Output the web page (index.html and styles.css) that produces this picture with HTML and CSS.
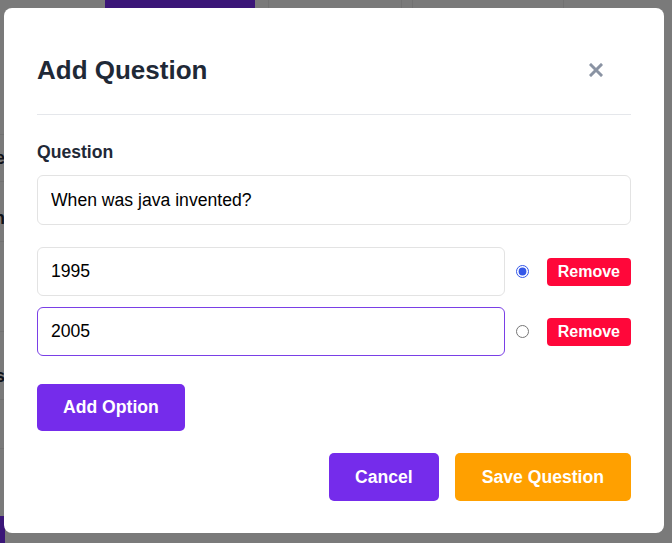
FILE: index.html
```html
<!DOCTYPE html>
<html>
<head>
  <meta charset="UTF-8">
  <title>Quiz Builder</title>
  <link rel="stylesheet" href="styles.css">
</head>
<body>
  <div class="page">
    <nav class="tabs">
      <span class="tab active"></span>
      <span class="tab t1"></span>
      <span class="tab t2"></span>
      <span class="tab t3"></span>
      <span class="tab t4"></span>
    </nav>
    <div class="side">
      <div class="row r1"></div>
      <div class="row r2">Title</div>
      <div class="row r3">Question</div>
      <div class="row r4"></div>
      <div class="row r5">Options</div>
      <div class="row r6"></div>
      <div class="side-btn"></div>
    </div>
  </div>

  <div class="overlay">
    <div class="modal">
      <div class="modal-header">
        <h2>Add Question</h2>
        <button class="close" aria-label="Close">
          <svg width="14" height="14" viewBox="0 0 14 14"><path d="M2 2L12 12M12 2L2 12" stroke="#8a93a3" stroke-width="3" stroke-linecap="square"/></svg>
        </button>
      </div>

      <label class="field-label" for="question">Question</label>
      <input id="question" class="text-input" type="text" value="When was java invented?">

      <div class="options">
        <div class="option-row">
          <input class="text-input" type="text" value="1995">
          <input class="radio" type="radio" name="correct" checked>
          <button class="btn-remove">Remove</button>
        </div>
        <div class="option-row">
          <input class="text-input focused" type="text" value="2005">
          <input class="radio" type="radio" name="correct">
          <button class="btn-remove">Remove</button>
        </div>
      </div>

      <button class="btn btn-purple add-option">Add Option</button>

      <div class="modal-footer">
        <button class="btn btn-purple">Cancel</button>
        <button class="btn btn-orange">Save Question</button>
      </div>
    </div>
  </div>
</body>
</html>
```

FILE: styles.css
```css
body {
  margin: 0;
  font-family: "Liberation Sans", Arial, sans-serif;
  background: #f4f4f4;
  height: 543px;
  overflow: hidden;
}

/* page behind the dialog */
.page {
  height: 543px;
}
.tabs {
  display: flex;
  padding-left: 105px;
  height: 40px;
}
.tab {
  box-sizing: border-box;
  border-right: 1px solid #e4e4e4;
}
.tab.active {
  width: 150px;
  background: #772cf0;
  border-right: none;
}
.t1 { width: 14px; }
.t2 { width: 133px; }
.t3 { width: 11px; }
.t4 { width: 151px; }
.side {
  width: 5px;
  overflow: hidden;
  display: flex;
  flex-direction: column;
}
.row {
  box-sizing: border-box;
  border-bottom: 1px solid #e4e4e4;
  font-weight: bold;
  font-size: 18px;
  color: #1f2937;
  display: flex;
  align-items: center;
  justify-content: flex-end;
  white-space: nowrap;
}
.r1 { height: 95px; }
.r2 { height: 47px; }
.r3 { height: 60px; padding-top: 14px; }
.r4 { height: 90px; }
.r5 { height: 68px; padding-top: 22px; }
.r6 { height: 49px; }
.side-btn {
  margin-top: 67px;
  width: 8px;
  height: 40px;
  background: #772cf0;
}

/* dialog */
.overlay {
  position: fixed;
  inset: 0;
  background: rgba(0, 0, 0, 0.5);
  padding: 8px 0 0 4px;
}
.modal {
  width: 660px;
  box-sizing: border-box;
  background: #fff;
  border-radius: 8px;
  padding: 30px 33px 32px;
}
.modal-header {
  display: flex;
  align-items: center;
  justify-content: space-between;
  padding: 16px 0 28px;
  border-bottom: 1px solid #e5e7eb;
  margin-bottom: 25px;
}
.modal-header h2 {
  margin: 0;
  font-size: 26px;
  line-height: 32px;
  color: #1f2937;
}
.close {
  background: none;
  border: none;
  padding: 0;
  margin-right: 28px;
  width: 14px;
  height: 14px;
  display: flex;
}
.field-label {
  display: block;
  font-weight: bold;
  font-size: 17.6px;
  line-height: 24px;
  color: #1f2937;
  margin-bottom: 11px;
}
.text-input {
  display: block;
  width: 100%;
  box-sizing: border-box;
  height: 50px;
  border: 1px solid #e3e3e3;
  border-radius: 6px;
  padding: 0 13px;
  font-family: "Liberation Sans", Arial, sans-serif;
  font-size: 17.6px;
  color: #000;
  outline: none;
}
.text-input.focused {
  border-color: #7a3fe6;
}
.options {
  display: flex;
  flex-direction: column;
  gap: 11px;
  margin-top: 22px;
}
.option-row {
  display: flex;
  align-items: center;
}
.option-row .text-input {
  flex: 1;
  height: 49px;
}
.radio {
  width: 13px;
  height: 13px;
  margin: 0 18px 0 11px;
  accent-color: #3457e8;
}
.btn-remove {
  background: #ff073a;
  color: #fff;
  border: none;
  border-radius: 4px;
  height: 28px;
  padding: 0 11px;
  font-family: "Liberation Sans", Arial, sans-serif;
  font-weight: bold;
  font-size: 16px;
}
.btn {
  border: none;
  border-radius: 5px;
  height: 48px;
  padding: 0 26px;
  color: #fff;
  font-family: "Liberation Sans", Arial, sans-serif;
  font-weight: bold;
  font-size: 17.6px;
}
.btn-purple {
  background: #752ceb;
}
.btn-orange {
  background: #ffa000;
  padding: 0 27px;
}
.add-option {
  display: block;
  height: 47px;
  margin-top: 28px;
}
.modal-footer {
  display: flex;
  justify-content: flex-end;
  gap: 16px;
  margin-top: 22px;
}
```
